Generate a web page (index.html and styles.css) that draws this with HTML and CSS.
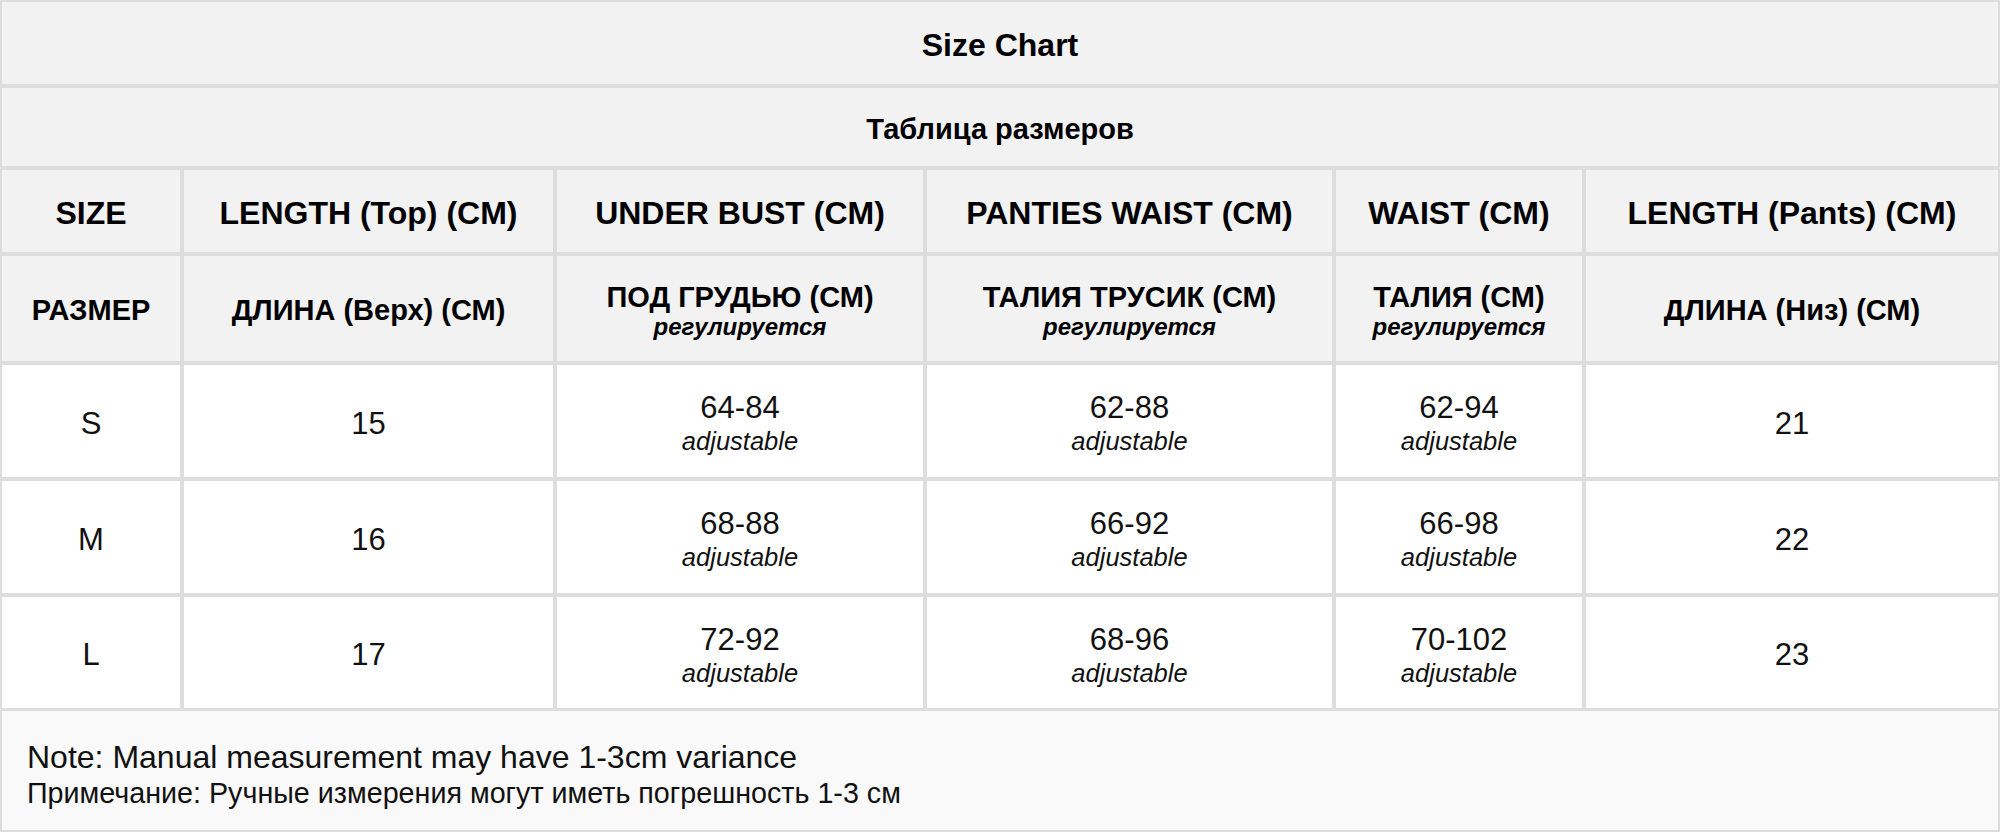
FILE: index.html
```html
<!DOCTYPE html>
<html lang="ru">
<head>
<meta charset="utf-8">
<title>Size Chart</title>
<link rel="stylesheet" href="styles.css">
</head>
<body>
<div class="chart">
  <div class="cell head span title">Size Chart</div>
  <div class="cell head span subtitle">Таблица размеров</div>

  <div class="cell head en">SIZE</div>
  <div class="cell head en">LENGTH (Top) (CM)</div>
  <div class="cell head en">UNDER BUST (CM)</div>
  <div class="cell head en">PANTIES WAIST (CM)</div>
  <div class="cell head en">WAIST (CM)</div>
  <div class="cell head en">LENGTH (Pants) (CM)</div>

  <div class="cell head ru">РАЗМЕР</div>
  <div class="cell head ru">ДЛИНА (Верх) (СМ)</div>
  <div class="cell head ru"><span>ПОД ГРУДЬЮ (СМ)</span><em class="adj-ru">регулируется</em></div>
  <div class="cell head ru"><span>ТАЛИЯ ТРУСИК (СМ)</span><em class="adj-ru">регулируется</em></div>
  <div class="cell head ru"><span>ТАЛИЯ (СМ)</span><em class="adj-ru">регулируется</em></div>
  <div class="cell head ru">ДЛИНА (Низ) (СМ)</div>

  <div class="cell val">S</div>
  <div class="cell val">15</div>
  <div class="cell val"><span>64-84</span><em class="adj">adjustable</em></div>
  <div class="cell val"><span>62-88</span><em class="adj">adjustable</em></div>
  <div class="cell val"><span>62-94</span><em class="adj">adjustable</em></div>
  <div class="cell val">21</div>

  <div class="cell val">M</div>
  <div class="cell val">16</div>
  <div class="cell val"><span>68-88</span><em class="adj">adjustable</em></div>
  <div class="cell val"><span>66-92</span><em class="adj">adjustable</em></div>
  <div class="cell val"><span>66-98</span><em class="adj">adjustable</em></div>
  <div class="cell val">22</div>

  <div class="cell val">L</div>
  <div class="cell val">17</div>
  <div class="cell val"><span>72-92</span><em class="adj">adjustable</em></div>
  <div class="cell val"><span>68-96</span><em class="adj">adjustable</em></div>
  <div class="cell val"><span>70-102</span><em class="adj">adjustable</em></div>
  <div class="cell val">23</div>
</div>
<div class="note">
  <p class="note-en">Note: Manual measurement may have 1-3cm variance</p>
  <p class="note-ru">Примечание: Ручные измерения могут иметь погрешность 1-3 см</p>
</div>
</body>
</html>
```

FILE: styles.css
```css
* { box-sizing: border-box; }

html, body {
  margin: 0;
  padding: 0;
  background: #ffffff;
}

body {
  width: 2000px;
  height: 832px;
  overflow: hidden;
  font-family: "Liberation Sans", Arial, "Noto Sans", sans-serif;
  color: #111111;
}

.chart {
  display: grid;
  grid-template-columns: 182px 373px 370px 409px 250px 416px;
  grid-template-rows: 86px 82px 86px 109px 116px 116px 115px;
}

.cell {
  border: 2px solid #dddddd;
  padding-top: 5px;
  display: flex;
  flex-direction: column;
  align-items: center;
  justify-content: center;
  text-align: center;
  background: #ffffff;
}

.head {
  background: #f2f2f2;
  font-weight: bold;
  color: #000000;
}

.span { grid-column: 1 / -1; }

.title { font-size: 32px; }
.subtitle { font-size: 29px; }

.en { font-size: 32px; }
.ru { font-size: 29px; line-height: 1.1; }

.adj-ru {
  font-size: 24px;
  font-style: italic;
  font-weight: bold;
  line-height: 1.1;
}

.val {
  font-size: 31px;
  line-height: 1.15;
}

.adj {
  font-size: 25.5px;
  font-style: italic;
  line-height: 1.2;
}

.note {
  height: 122px;
  background: #f9f9f9;
  border: 2px solid #dddddd;
  border-top-width: 1px;
  padding: 27px 0 0 25px;
}

.note p { margin: 0; }

.note-en {
  font-size: 32px;
  line-height: 38px;
}

.note-ru {
  font-size: 28.7px;
  line-height: 34px;
}
```
